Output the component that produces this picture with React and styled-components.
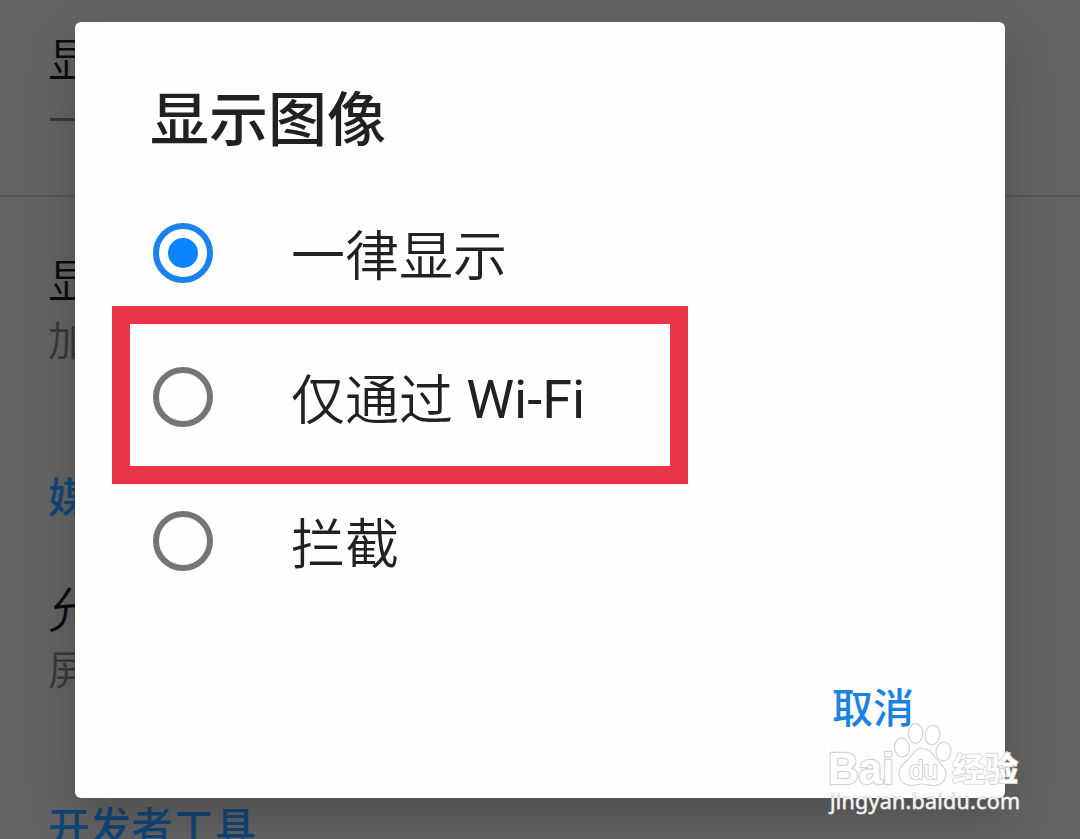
import React from 'react';
import styled, { createGlobalStyle } from 'styled-components';

const GlobalStyle = createGlobalStyle`
* {
    box-sizing: border-box;
}
body {
    margin: 0;
    background: #636363;
    font-family: Roboto, "Noto Sans CJK SC", sans-serif;
}
`

const Screen = styled.div`
    position: relative;
    width: 1080px;
    height: 839px;
    overflow: hidden;
    background: #646464;
`

const Settings = styled.div`
    display: flex;
    flex-direction: column;
`

const Section = styled.section`
    display: flex;
    flex-direction: column;
    height: ${props => props.$height}px;
    padding: ${props => props.$top}px 0 0 48px;
    border-bottom: ${props => (props.$divider ? '2px solid #575757' : 'none')};
`

const Name = styled.div`
    font-size: 47px;
    font-weight: 350;
    line-height: 60px;
    color: #0b0b0b;
`

const Summary = styled.div`
    font-size: 41px;
    font-weight: 350;
    line-height: 60px;
    color: #383838;
`

const Heading = styled.div`
    font-size: 41.6px;
    font-weight: 500;
    line-height: 60px;
    color: #104679;
`

const Item = styled.div`
    margin-top: 52px;
`

const Overlay = styled.div`
    position: absolute;
    inset: 0;
    display: flex;
    justify-content: center;
    align-items: flex-start;
    padding-top: 22px;
`

const Dialog = styled.div`
    display: flex;
    flex-direction: column;
    width: 930px;
    height: 776px;
    padding: 62px 75px 59px;
    border-radius: 6px;
    background: #fefefe;
    box-shadow: 0 20px 50px rgba(0, 0, 0, 0.22);
`

const Title = styled.h1`
    margin: 0;
    height: 97px;
    font-size: 59px;
    font-weight: 500;
    line-height: 74px;
    color: #212121;
`

const Option = styled.div`
    position: relative;
    display: flex;
    align-items: center;
    height: 144px;
    padding-left: 3px;
`

const Radio = styled.span`
    display: flex;
    justify-content: center;
    align-items: center;
    width: 60px;
    height: 60px;
    margin-right: 78px;
    border: 6px solid ${props => (props.$checked ? '#1a82e8' : '#757575')};
    border-radius: 50%;

    &::after {
        content: '';
        width: 30px;
        height: 30px;
        border-radius: 50%;
        background: ${props => (props.$checked ? '#0a84ff' : 'transparent')};
    }
`

const Label = styled.span`
    padding-top: 10px;
    font-size: 54px;
    font-weight: 350;
    line-height: 66px;
    color: #212121;
`

const Latin = styled.span`
    font-weight: 400;
    line-height: 1;
    vertical-align: 2px;
`

const Highlight = styled.div`
    position: absolute;
    top: -19px;
    left: -38px;
    width: 576px;
    height: 178px;
    border: 18px solid #e93547;
`

const Actions = styled.div`
    display: flex;
    justify-content: flex-end;
    margin-top: auto;
`

const Cancel = styled.button`
    margin-right: 16px;
    padding: 0;
    border: 0;
    background: none;
    font-family: inherit;
    font-size: 41px;
    font-weight: 500;
    line-height: 60px;
    color: #1a82e2;
`

const Watermark = styled.svg`
    position: absolute;
    left: 820px;
    top: 715px;
`

const options = [
    { label: '一律显示', checked: true },
    { label: '仅通过 ', latin: 'Wi-Fi', highlight: true },
    { label: '拦截' },
]

const BaiduMark = () => {
    return (
        <Watermark width="210" height="105" viewBox="820 715 210 105">
            <g fill="#fff" fillOpacity="0.85" stroke="#d4d4d4" strokeWidth="1.2">
                <ellipse cx="902" cy="747.5" rx="7.5" ry="9.5" transform="rotate(-8 902 747.5)" />
                <ellipse cx="915.5" cy="733.5" rx="7.2" ry="9.8" />
                <ellipse cx="932.5" cy="735" rx="7.5" ry="9.8" transform="rotate(8 932.5 735)" />
                <ellipse cx="943.5" cy="751.5" rx="7.5" ry="9.5" transform="rotate(8 943.5 751.5)" />
                <path d="M922 748.500c-8 0-10 8-15 12s-9 8-8 14c1 7 6 11 13 11 4 0 6-1.500 10-1.500s6 1.500 11 1.500c8 0 13-5 13-12 0-6-5-9-9-14s-7-11-15-11z" />
            </g>
            <g fill="#fff" stroke="#d4d4d4" strokeWidth="2.6" strokeLinejoin="round" paintOrder="stroke">
                <text x="828" y="783.5" fontFamily="Liberation Sans, sans-serif" fontWeight="700" fontSize="44" textLength="66" lengthAdjust="spacingAndGlyphs">Bai</text>
                <text x="909" y="779" fontFamily="Liberation Sans, sans-serif" fontSize="25" strokeWidth="2.2" textLength="29" lengthAdjust="spacingAndGlyphs">du</text>
                <text x="952" y="780.5" fontFamily="Noto Sans CJK SC, sans-serif" fontWeight="700" fontSize="33" strokeWidth="1.8" textLength="66">经验</text>
            </g>
            <text
                x="830"
                y="808.5"
                fontFamily="Noto Sans, sans-serif"
                fontSize="21.5"
                textLength="190"
                fill="#f4f4f4"
                stroke="#c4c4c4"
                strokeWidth="0.9"
                paintOrder="stroke"
            >jingyan.baidu.com</text>
        </Watermark>
    );
}

const App = () => {
    return (
        <Screen>
            <GlobalStyle />
            <Settings>
                <Section $height={197} $top={31} $divider>
                    <Name>显</Name>
                    <Summary>一</Summary>
                </Section>
                <Section $height={272} $top={55}>
                    <Name>显</Name>
                    <Summary>加</Summary>
                </Section>
                <Section $height={328} $top={0}>
                    <Heading>媒</Heading>
                    <Item>
                        <Name>允</Name>
                        <Summary>屏</Summary>
                    </Item>
                </Section>
                <Section $height={60} $top={2}>
                    <Heading>开发者工具</Heading>
                </Section>
            </Settings>
            <Overlay>
                <Dialog>
                    <Title>显示图像</Title>
                    {options.map(option => (
                        <Option key={option.label}>
                            <Radio $checked={option.checked} />
                            <Label>
                                {option.label}
                                {option.latin && <Latin>{option.latin}</Latin>}
                            </Label>
                            {option.highlight && <Highlight />}
                        </Option>
                    ))}
                    <Actions>
                        <Cancel>取消</Cancel>
                    </Actions>
                </Dialog>
            </Overlay>
            <BaiduMark />
        </Screen>
    );
}

export default App;
